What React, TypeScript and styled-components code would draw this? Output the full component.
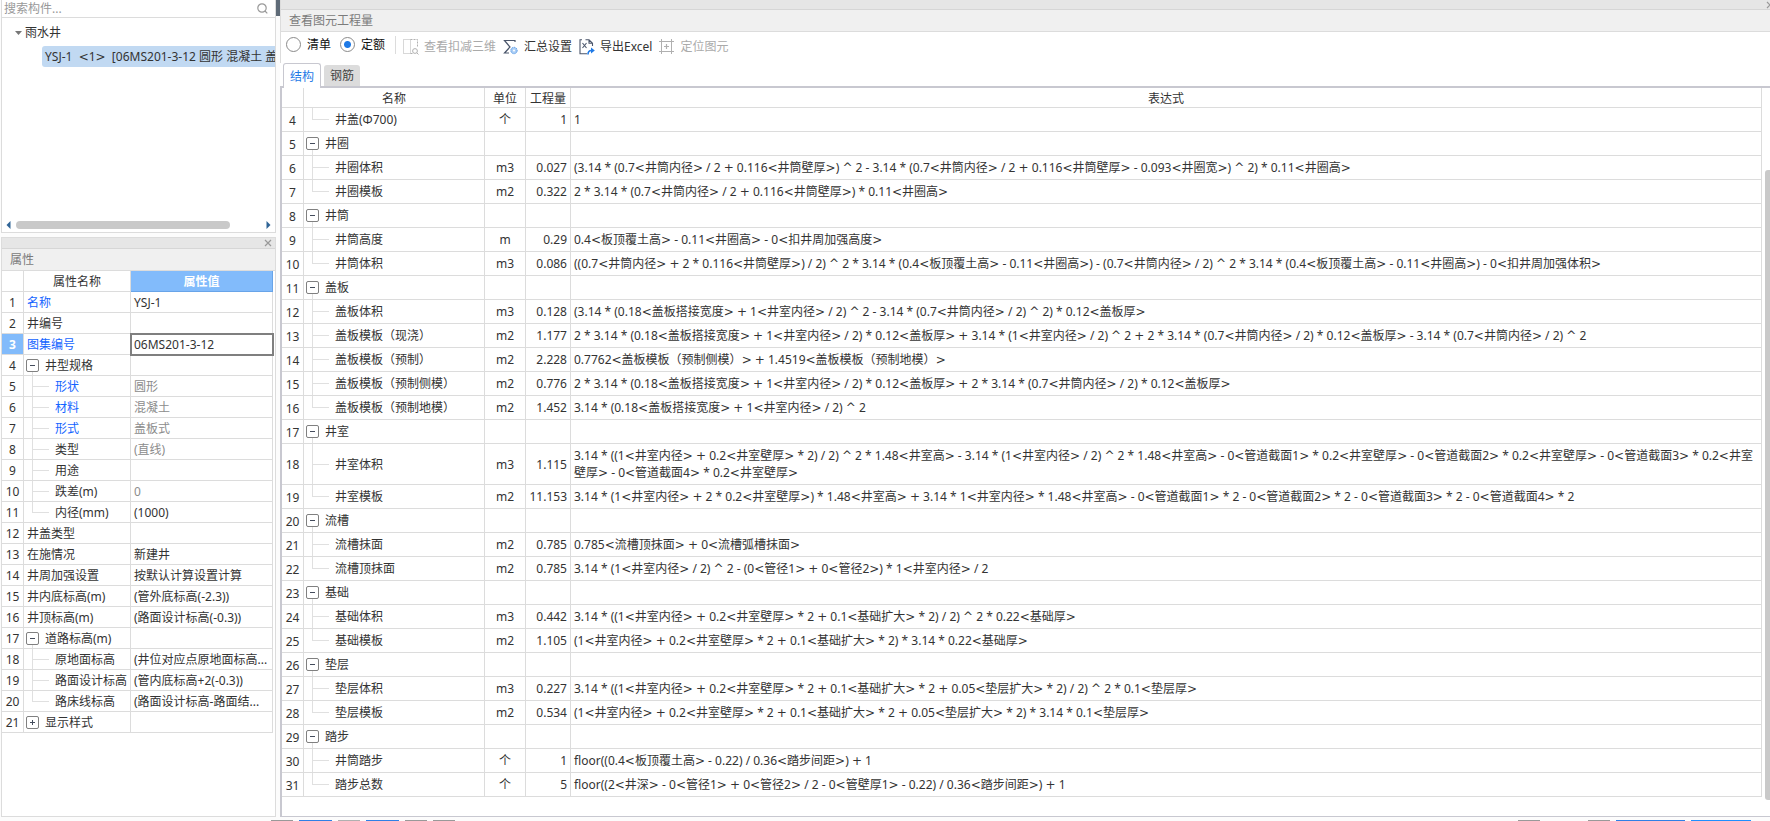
import React, { useState } from 'react';
import styled, { createGlobalStyle, css } from 'styled-components';

const line = '#dcdcdc';
const ink = '#333333';
const branch = 'linear-gradient(#e0e0e0, #e0e0e0)';

const GlobalStyle = createGlobalStyle`
  *, *::before, *::after { box-sizing: border-box; }
  body {
    margin: 0;
    background: #fcfcfc;
    color: ${ink};
    font: 12px/17px "Noto Sans", "Noto Sans CJK SC", sans-serif;
  }
  button, input { font: inherit; color: inherit; }
`;

const Page = styled.div`
  display: flex;
  flex-direction: column;
  min-height: 100vh;
`;

const Workspace = styled.main`
  flex: 1;
  display: flex;
`;

const Sidebar = styled.aside`
  flex: none;
  width: 276px;
  padding-left: 1px;
  display: flex;
  flex-direction: column;
  gap: 4px;
`;

const Splitter = styled.div`
  flex: none;
  width: 4px;
  height: 16px;
  background: #5f6b78;
`;

const SidePanel = styled.section<{ $grow?: boolean }>`
  display: flex;
  flex-direction: column;
  flex: ${p => (p.$grow ? '1' : 'none')};
  border: 1px solid ${line};
  border-top-width: ${p => (p.$grow ? '1px' : '0')};
  background: #fff;
  overflow: hidden;
`;

const SearchBar = styled.label`
  display: flex;
  align-items: center;
  height: 18px;
  padding: 0 7px 0 2px;
  border-bottom: 1px solid ${line};
  color: #999;
`;

const SearchInput = styled.input`
  flex: 1;
  min-width: 0;
  height: 17px;
  padding: 0;
  border: 0;
  outline: 0;
  background: none;
  &::placeholder { color: #999; opacity: 1; }
`;

const Tree = styled.ul`
  height: 201px;
  margin: 0;
  padding: 4px 0 0;
  list-style: none;
`;

const TreeGroup = styled.li`
  display: flex;
  align-items: center;
  gap: 3px;
  height: 21px;
  padding-left: 13px;
`;

const TreeItem = styled.li`
  height: 21px;
  margin: 3px 0 0 40px;
  padding: 2px 0 2px 3px;
  border-radius: 3px 0 0 3px;
  background: #c1d9f2;
  white-space: nowrap;
  overflow: hidden;
`;

const HorizontalScroll = styled.div`
  display: flex;
  align-items: center;
  height: 13px;
  padding: 0 4px 1px;
`;

const HorizontalThumb = styled.div`
  width: 214px;
  height: 8px;
  margin: 0 auto 0 5px;
  border-radius: 4px;
  background: #c9c9c9;
`;

const PanelBar = styled.div<{ $tall?: boolean }>`
  display: flex;
  align-items: center;
  justify-content: flex-end;
  height: ${p => (p.$tall ? '11px' : '10px')};
  padding-right: ${p => (p.$tall ? '3px' : '0')};
  border-bottom: 1px solid #d6d6d6;
  background: #e6e6e6;
`;

const CloseButton = styled.button<{ $clipped?: boolean }>`
  display: flex;
  width: ${p => (p.$clipped ? '4px' : '8px')};
  height: 8px;
  padding: 0;
  border: 0;
  background: none;
  overflow: hidden;
  svg { flex: none; }
`;

const PanelTitle = styled.h2`
  height: 22px;
  margin: 0;
  padding: 2px 8px;
  border-bottom: 1px solid ${line};
  background: #f0f0f0;
  color: #7b7b7b;
  font-size: 12px;
  line-height: 17px;
  font-weight: 400;
`;

const Grid = styled.table`
  width: 100%;
  border-collapse: separate;
  border-spacing: 0;
  table-layout: fixed;
`;

const cell = css`
  padding: 0 3px;
  border: solid ${line};
  border-width: 0 1px 1px 0;
  font-weight: 400;
  white-space: nowrap;
`;

const HeadCell = styled.th<{ $active?: boolean }>`
  ${cell}
  height: ${p => (p.$active === undefined ? '20px' : '21px')};
  padding: ${p => (p.$active === undefined ? '2px 0 0' : '0')};
  ${p => p.$active && css`
    border-color: #68a4e8;
    background: #82bbfb;
    color: #fff;
    font-weight: 700;
  `}
`;

const IndexCell = styled.th<{ $active?: boolean }>`
  ${cell}
  padding: 1px 0 0;
  ${p => p.$active && css`
    background: #82bbfb;
    color: #fff;
    font-weight: 700;
  `}
`;

type Level = 'root' | 'open' | 'closed' | 'child' | 'last';

const NameCell = styled.td<{ $level: Level; $link?: boolean }>`
  ${cell}
  padding-left: ${p => (p.$level === 'child' || p.$level === 'last' ? '31px' : p.$level === 'root' ? '3px' : '2px')};
  padding-right: 0;
  color: ${p => (p.$link ? '#1464ff' : 'inherit')};
  background-repeat: no-repeat;
  ${p => p.$level === 'open' && css`
    background-image: ${branch};
    background-position: 8px 100%;
    background-size: 1px 5px;
  `}
  ${p => (p.$level === 'child' || p.$level === 'last') && css`
    background-image: ${branch}, ${branch};
    background-position: 8px 0, 8px 50%;
    background-size: 1px ${p.$level === 'last' ? '50%' : '100%'}, 17px 1px;
  `}
`;

const ToggleRow = styled.span`
  display: flex;
  align-items: center;
  gap: 6px;
`;

const Toggle = styled.button`
  display: flex;
  align-items: center;
  justify-content: center;
  width: 13px;
  height: 13px;
  padding: 0;
  border: 1px solid #808080;
  border-radius: 2px;
  background: #fff;
`;

const Cell = styled.td<{ $align?: 'center' | 'right'; $wrap?: boolean; $muted?: boolean; $editing?: boolean }>`
  ${cell}
  text-align: ${p => p.$align || 'left'};
  white-space: ${p => (p.$wrap ? 'normal' : 'nowrap')};
  color: ${p => (p.$muted ? '#8c8c8c' : 'inherit')};
  ${p => p.$editing && css`
    outline: 2px solid #7f7f7f;
    outline-offset: -1px;
  `}
`;

const ValueInput = styled.input`
  display: block;
  width: 100%;
  height: 17px;
  padding: 0;
  border: 0;
  outline: 0;
  background: none;
`;

const PropertyGrid = styled(Grid)`
  width: calc(100% - 2px);
  tbody tr > * { height: 21px; }
`;

const QuantityGrid = styled(Grid)`
  tbody td { height: 24px; padding-top: 3px; padding-bottom: 3px; }
`;

const Operator = styled.span`
  font-family: "DejaVu Sans", sans-serif;
  line-height: 0;
`;

const QuantityPanel = styled.section`
  flex: 1;
  min-width: 0;
  display: flex;
  flex-direction: column;
  background: #fff;
`;

const QuantityHeader = styled.header`
  border-left: 1px solid ${line};
`;

const Toolbar = styled.div`
  display: flex;
  align-items: center;
  height: 31px;
  padding: 0 0 6px 5px;
`;

const RadioLabel = styled.label`
  display: flex;
  align-items: center;
  gap: 6px;
  margin-right: 9px;
  color: #111;
`;

const Radio = styled.input`
  appearance: none;
  flex: none;
  width: 15px;
  height: 15px;
  margin: 0;
  border: 1px solid #8a8a8a;
  border-radius: 50%;
  background: #fff;
  &:checked { background: radial-gradient(circle, #1f7ae6 3px, #fff 4px); }
`;

const Divider = styled.span`
  width: 1px;
  height: 18px;
  margin: 0 7px 0 1px;
  background: ${line};
`;

const ToolButton = styled.button`
  display: flex;
  align-items: center;
  gap: 5px;
  margin-right: 7px;
  padding: 4px 0 0;
  border: 0;
  background: none;
  color: ${ink};
  white-space: nowrap;
  &:disabled { color: #aaa; }
`;

const Tabs = styled.div`
  display: flex;
  align-items: flex-end;
  gap: 3px;
  height: 23px;
  padding-left: 3px;
`;

const Tab = styled.button<{ $active?: boolean }>`
  position: relative;
  height: 21px;
  padding: 0 6px;
  border: 0;
  border-radius: 3px 3px 0 0;
  background: #dcdcdc;
  color: #444;
  ${p => p.$active && css`
    height: 25px;
    margin-bottom: -2px;
    border: 1px solid #c8c8d0;
    border-bottom: 0;
    background: #fff;
    color: #1f7ae6;
  `}
`;

const GridArea = styled.div`
  flex: 1;
  display: flex;
  align-items: stretch;
  border: solid #c8c8d0;
  border-width: 2px 0 1px 2px;
`;

const GridBody = styled.div`
  flex: 1;
  min-width: 0;
`;

const ScrollTrack = styled.div`
  flex: none;
  display: flex;
  width: 8px;
  padding: 82px 0 16px 3px;
`;

const ScrollThumb = styled.div`
  flex: 1;
  border-radius: 3px 0 0 3px;
  background: #c9c9c9;
`;

const BottomStrip = styled.footer`
  display: flex;
  justify-content: space-between;
  height: 4px;
  padding: 3px 19px 0 271px;
`;

const StripGroup = styled.div`
  display: flex;
  gap: 6px;
`;

const StripEdge = styled.span<{ $width: number; $tone: string; $push?: number }>`
  width: ${p => p.$width}px;
  height: 1px;
  margin-right: ${p => p.$push || 0}px;
  background: ${p => p.$tone};
`;

const Cross = () => (
  <svg width="8" height="8" viewBox="0 0 8 8" fill="none" stroke="#999" strokeWidth="1.2">
    <path d="M1 1l6 6M7 1L1 7" />
  </svg>
);

const PlusMinus = ({ plus }: { plus?: boolean }) => (
  <svg width="5" height="5" viewBox="0 0 5 5" stroke="#444c5c" strokeWidth="1">
    <path d={plus ? 'M0 2.5h5M2.5 0v5' : 'M0 2.5h5'} />
  </svg>
);

const SearchIcon = () => (
  <svg width="11" height="11" viewBox="0 0 11 11" fill="none" stroke="#999" strokeWidth="1.2">
    <circle cx="5" cy="5" r="4.2" />
    <path d="M8 8l2.3 2.3" />
  </svg>
);

const Caret = () => (
  <svg width="7" height="4" viewBox="0 0 7 4"><path d="M0 0h7L3.5 4z" fill="#777" /></svg>
);

const Arrow = ({ right }: { right?: boolean }) => (
  <svg width="5" height="8" viewBox="0 0 5 8">
    <path d={right ? 'M0.5 0l4 4-4 4z' : 'M4.5 0l-4 4 4 4z'} fill="#2f6496" />
  </svg>
);

const DeductIcon = () => (
  <svg width="16" height="16" viewBox="0 0 16 16" fill="none" stroke="#b0b0b0">
    <path d="M7.5 .5h-7v14h7z" strokeDasharray="1 1" />
    <path d="M7.5 .5h7v7M7.5 14.5h2" strokeDasharray="2 1" />
    <circle cx="12" cy="12" r="2.4" />
    <path d="M13.8 13.8l1.7 1.7" />
  </svg>
);

const SumIcon = () => (
  <svg width="16" height="16" viewBox="0 0 16 16" fill="none">
    <path d="M12 3V1.5H1.5L7 8l-5.5 6H6" stroke="#4b566b" strokeWidth="1.2" />
    <circle cx="11" cy="11.5" r="3.2" fill="#a9cdf5" stroke="#5b9be6" strokeDasharray="1.3 .8" />
    <circle cx="11" cy="11.5" r="1" fill="#fff" />
  </svg>
);

const ExportIcon = () => (
  <svg width="16" height="16" viewBox="0 0 16 16" fill="none" stroke="#4b566b" strokeWidth="1.1">
    <path d="M3 .8H1v14h7M6.5 .8H10l3.5 3.5V7M10 .8v3.5h3.500" />
    <path d="M3.5 4l4 5M7.5 4l-4 5" />
    <path d="M9 15.5c0-3 1.3-4 3.5-4" stroke="#1f7ae6" strokeWidth="1.6" />
    <path d="M12 8.5l3.8 3-3.8 3z" fill="#1f7ae6" stroke="none" />
  </svg>
);

const LocateIcon = () => (
  <svg width="16" height="16" viewBox="0 0 16 16" fill="none" stroke="#b0b0b0">
    <path d="M2.5 0v15M12.5 0v15M0 2.5h15M0 12.5h15" />
    <path d="M7.5 5v5M5 7.5h5" strokeWidth="1.2" />
  </svg>
);

interface Property { name: string; level: Level; value?: string; link?: boolean; muted?: boolean }

const properties: Property[] = [
  { name: '名称', level: 'root', value: 'YSJ-1', link: true },
  { name: '井编号', level: 'root' },
  { name: '图集编号', level: 'root', value: '06MS201-3-12', link: true },
  { name: '井型规格', level: 'open' },
  { name: '形状', level: 'child', value: '圆形', link: true, muted: true },
  { name: '材料', level: 'child', value: '混凝土', link: true, muted: true },
  { name: '形式', level: 'child', value: '盖板式', link: true, muted: true },
  { name: '类型', level: 'child', value: '(直线)', muted: true },
  { name: '用途', level: 'child' },
  { name: '跌差(m)', level: 'child', value: '0', muted: true },
  { name: '内径(mm)', level: 'last', value: '(1000)' },
  { name: '井盖类型', level: 'root' },
  { name: '在施情况', level: 'root', value: '新建井' },
  { name: '井周加强设置', level: 'root', value: '按默认计算设置计算' },
  { name: '井内底标高(m)', level: 'root', value: '(管外底标高(-2.3))' },
  { name: '井顶标高(m)', level: 'root', value: '(路面设计标高(-0.3))' },
  { name: '道路标高(m)', level: 'open' },
  { name: '原地面标高', level: 'child', value: '(井位对应点原地面标高...' },
  { name: '路面设计标高', level: 'child', value: '(管内底标高+2(-0.3))' },
  { name: '路床线标高', level: 'last', value: '(路面设计标高-路面结...' },
  { name: '显示样式', level: 'closed' },
];

type Quantity = [name: string, level: Level, unit?: string, amount?: string, formula?: string];

const quantities: Quantity[] = [
  ['井盖(Φ700)', 'last', '个', '1', '1'],
  ['井圈', 'open'],
  ['井圈体积', 'child', 'm3', '0.027', '(3.14 * (0.7<井筒内径> / 2 + 0.116<井筒壁厚>) ^ 2 - 3.14 * (0.7<井筒内径> / 2 + 0.116<井筒壁厚> - 0.093<井圈宽>) ^ 2) * 0.11<井圈高>'],
  ['井圈模板', 'last', 'm2', '0.322', '2 * 3.14 * (0.7<井筒内径> / 2 + 0.116<井筒壁厚>) * 0.11<井圈高>'],
  ['井筒', 'open'],
  ['井筒高度', 'child', 'm', '0.29', '0.4<板顶覆土高> - 0.11<井圈高> - 0<扣井周加强高度>'],
  ['井筒体积', 'last', 'm3', '0.086', '((0.7<井筒内径> + 2 * 0.116<井筒壁厚>) / 2) ^ 2 * 3.14 * (0.4<板顶覆土高> - 0.11<井圈高>) - (0.7<井筒内径> / 2) ^ 2 * 3.14 * (0.4<板顶覆土高> - 0.11<井圈高>) - 0<扣井周加强体积>'],
  ['盖板', 'open'],
  ['盖板体积', 'child', 'm3', '0.128', '(3.14 * (0.18<盖板搭接宽度> + 1<井室内径> / 2) ^ 2 - 3.14 * (0.7<井筒内径> / 2) ^ 2) * 0.12<盖板厚>'],
  ['盖板模板（现浇）', 'child', 'm2', '1.177', '2 * 3.14 * (0.18<盖板搭接宽度> + 1<井室内径> / 2) * 0.12<盖板厚> + 3.14 * (1<井室内径> / 2) ^ 2 + 2 * 3.14 * (0.7<井筒内径> / 2) * 0.12<盖板厚> - 3.14 * (0.7<井筒内径> / 2) ^ 2'],
  ['盖板模板（预制）', 'child', 'm2', '2.228', '0.7762<盖板模板（预制侧模）> + 1.4519<盖板模板（预制地模）>'],
  ['盖板模板（预制侧模）', 'child', 'm2', '0.776', '2 * 3.14 * (0.18<盖板搭接宽度> + 1<井室内径> / 2) * 0.12<盖板厚> + 2 * 3.14 * (0.7<井筒内径> / 2) * 0.12<盖板厚>'],
  ['盖板模板（预制地模）', 'last', 'm2', '1.452', '3.14 * (0.18<盖板搭接宽度> + 1<井室内径> / 2) ^ 2'],
  ['井室', 'open'],
  ['井室体积', 'child', 'm3', '1.115', '3.14 * ((1<井室内径> + 0.2<井室壁厚> * 2) / 2) ^ 2 * 1.48<井室高> - 3.14 * (1<井室内径> / 2) ^ 2 * 1.48<井室高> - 0<管道截面1> * 0.2<井室壁厚> - 0<管道截面2> * 0.2<井室壁厚> - 0<管道截面3> * 0.2<井室壁厚> - 0<管道截面4> * 0.2<井室壁厚>'],
  ['井室模板', 'last', 'm2', '11.153', '3.14 * (1<井室内径> + 2 * 0.2<井室壁厚>) * 1.48<井室高> + 3.14 * 1<井室内径> * 1.48<井室高> - 0<管道截面1> * 2 - 0<管道截面2> * 2 - 0<管道截面3> * 2 - 0<管道截面4> * 2'],
  ['流槽', 'open'],
  ['流槽抹面', 'child', 'm2', '0.785', '0.785<流槽顶抹面> + 0<流槽弧槽抹面>'],
  ['流槽顶抹面', 'last', 'm2', '0.785', '3.14 * (1<井室内径> / 2) ^ 2 - (0<管径1> + 0<管径2>) * 1<井室内径> / 2'],
  ['基础', 'open'],
  ['基础体积', 'child', 'm3', '0.442', '3.14 * ((1<井室内径> + 0.2<井室壁厚> * 2 + 0.1<基础扩大> * 2) / 2) ^ 2 * 0.22<基础厚>'],
  ['基础模板', 'last', 'm2', '1.105', '(1<井室内径> + 0.2<井室壁厚> * 2 + 0.1<基础扩大> * 2) * 3.14 * 0.22<基础厚>'],
  ['垫层', 'open'],
  ['垫层体积', 'child', 'm3', '0.227', '3.14 * ((1<井室内径> + 0.2<井室壁厚> * 2 + 0.1<基础扩大> * 2 + 0.05<垫层扩大> * 2) / 2) ^ 2 * 0.1<垫层厚>'],
  ['垫层模板', 'last', 'm2', '0.534', '(1<井室内径> + 0.2<井室壁厚> * 2 + 0.1<基础扩大> * 2 + 0.05<垫层扩大> * 2) * 3.14 * 0.1<垫层厚>'],
  ['踏步', 'open'],
  ['井筒踏步', 'child', '个', '1', 'floor((0.4<板顶覆土高> - 0.22) / 0.36<踏步间距>) + 1'],
  ['踏步总数', 'last', '个', '5', 'floor((2<井深> - 0<管径1> + 0<管径2> / 2 - 0<管壁厚1> - 0.22) / 0.36<踏步间距>) + 1'],
];

/* Sets the brackets and wide operators of a formula in the operator face. */
function Formula({ text }: { text: string }) {
  return (
    <>
      {text.split(/([<>+^])/).map((part, i) => (i % 2 ? <Operator key={i}>{part}</Operator> : part))}
    </>
  );
}

function Name({ name, level, link }: { name: string; level: Level; link?: boolean }) {
  return (
    <NameCell $level={level} $link={link}>
      {level === 'open' || level === 'closed' ? (
        <ToggleRow>
          <Toggle type="button" aria-label={name} aria-expanded={level === 'open'}>
            <PlusMinus plus={level === 'closed'} />
          </Toggle>
          {name}
        </ToggleRow>
      ) : name}
    </NameCell>
  );
}

function ComponentTree() {
  return (
    <SidePanel>
      <SearchBar>
        <SearchInput type="text" placeholder="搜索构件..." aria-label="搜索构件" />
        <SearchIcon />
      </SearchBar>
      <Tree>
        <TreeGroup><Caret />雨水井</TreeGroup>
        <TreeItem><Formula text={'YSJ-1 \u00a0<1> \u00a0[06MS201-3-12 圆形 混凝土 盖'} /></TreeItem>
      </Tree>
      <HorizontalScroll>
        <Arrow />
        <HorizontalThumb />
        <Arrow right />
      </HorizontalScroll>
    </SidePanel>
  );
}

function PropertyPanel() {
  const [code, setCode] = useState('06MS201-3-12');
  return (
    <SidePanel $grow>
      <PanelBar $tall>
        <CloseButton type="button" aria-label="关闭属性"><Cross /></CloseButton>
      </PanelBar>
      <PanelTitle>属性</PanelTitle>
      <PropertyGrid>
        <colgroup>
          <col style={{ width: 22 }} />
          <col style={{ width: 107 }} />
          <col />
        </colgroup>
        <thead>
          <tr>
            <HeadCell $active={false} />
            <HeadCell $active={false}>属性名称</HeadCell>
            <HeadCell $active>属性值</HeadCell>
          </tr>
        </thead>
        <tbody>
          {properties.map((p, i) => (
            <tr key={p.name}>
              <IndexCell scope="row" $active={i === 2}>{i + 1}</IndexCell>
              <Name name={p.name} level={p.level} link={p.link} />
              <Cell $muted={p.muted} $editing={i === 2}>
                {i === 2
                  ? <ValueInput type="text" aria-label={p.name} value={code} onChange={e => setCode(e.target.value)} />
                  : p.value}
              </Cell>
            </tr>
          ))}
        </tbody>
      </PropertyGrid>
    </SidePanel>
  );
}

function QuantityView() {
  const [mode, setMode] = useState('quota');
  return (
    <QuantityPanel>
      <QuantityHeader>
        <PanelBar>
          <CloseButton type="button" $clipped aria-label="关闭"><Cross /></CloseButton>
        </PanelBar>
        <PanelTitle>查看图元工程量</PanelTitle>
        <Toolbar>
          <RadioLabel>
            <Radio type="radio" name="mode" checked={mode === 'list'} onChange={() => setMode('list')} />
            清单
          </RadioLabel>
          <RadioLabel>
            <Radio type="radio" name="mode" checked={mode === 'quota'} onChange={() => setMode('quota')} />
            定额
          </RadioLabel>
          <Divider />
          <ToolButton type="button" disabled><DeductIcon />查看扣减三维</ToolButton>
          <ToolButton type="button"><SumIcon />汇总设置</ToolButton>
          <ToolButton type="button"><ExportIcon />导出Excel</ToolButton>
          <ToolButton type="button" disabled><LocateIcon />定位图元</ToolButton>
        </Toolbar>
      </QuantityHeader>
      <Tabs role="tablist">
        <Tab type="button" role="tab" aria-selected $active>结构</Tab>
        <Tab type="button" role="tab" aria-selected={false}>钢筋</Tab>
      </Tabs>
      <GridArea>
        <GridBody>
          <QuantityGrid>
            <colgroup>
              <col style={{ width: 22 }} />
              <col style={{ width: 181 }} />
              <col style={{ width: 41 }} />
              <col style={{ width: 45 }} />
              <col />
            </colgroup>
            <thead>
              <tr>
                <HeadCell />
                <HeadCell>名称</HeadCell>
                <HeadCell>单位</HeadCell>
                <HeadCell>工程量</HeadCell>
                <HeadCell>表达式</HeadCell>
              </tr>
            </thead>
            <tbody>
              {quantities.map(([name, level, unit, amount, formula], i) => (
                <tr key={name}>
                  <IndexCell scope="row">{i + 4}</IndexCell>
                  <Name name={name} level={level} />
                  <Cell $align="center">{unit}</Cell>
                  <Cell $align="right">{amount}</Cell>
                  <Cell $wrap>{formula && <Formula text={formula} />}</Cell>
                </tr>
              ))}
            </tbody>
          </QuantityGrid>
        </GridBody>
        <ScrollTrack><ScrollThumb /></ScrollTrack>
      </GridArea>
    </QuantityPanel>
  );
}

export default function App() {
  return (
    <Page>
      <GlobalStyle />
      <Workspace>
        <Sidebar>
          <ComponentTree />
          <PropertyPanel />
        </Sidebar>
        <Splitter />
        <QuantityView />
      </Workspace>
      <BottomStrip aria-hidden="true">
        <StripGroup>
          <StripEdge $width={22} $tone="#999" />
          <StripEdge $width={33} $tone="#2f80e6" />
          <StripEdge $width={22} $tone="#b0b0b0" />
          <StripEdge $width={33} $tone="#2f80e6" />
          <StripEdge $width={22} $tone="#999" />
          <StripEdge $width={22} $tone="#999" />
        </StripGroup>
        <StripGroup>
          <StripEdge $width={22} $tone="#999" $push={42} />
          <StripEdge $width={22} $tone="#999" />
          <StripEdge $width={69} $tone="#2f80e6" />
          <StripEdge $width={60} $tone="#1f8fff" />
        </StripGroup>
      </BottomStrip>
    </Page>
  );
}
